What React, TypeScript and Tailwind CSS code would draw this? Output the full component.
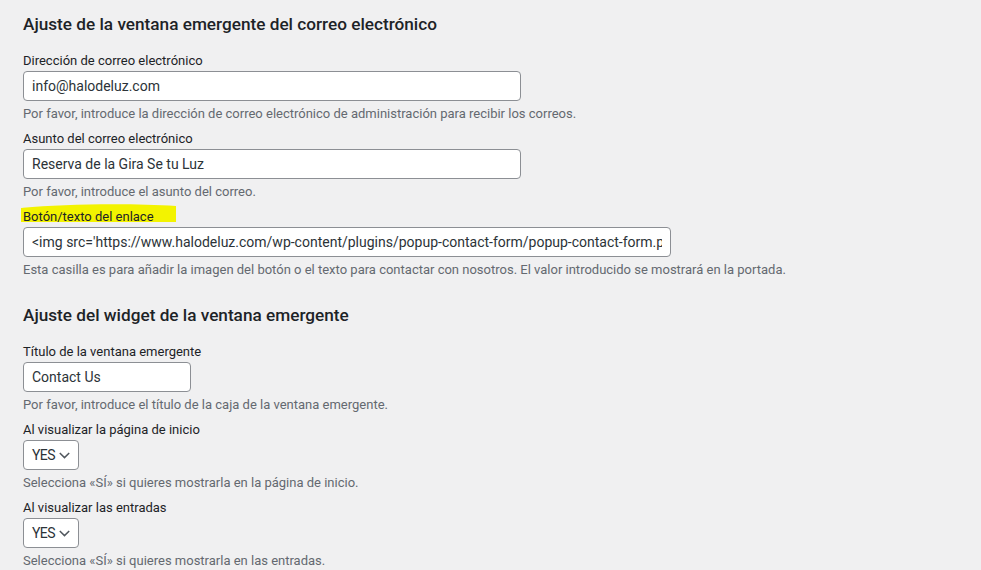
import React from "react";

function Label({ children, highlight }: { children: React.ReactNode; highlight?: boolean }) {
  return (
    <div className="relative h-[20px] text-[13px] leading-[22px] text-[#1d2327]">
      {highlight && (
        <svg className="absolute left-[-3px] top-[-3px]" width="158" height="20" viewBox="0 0 158 20">
          <path d="M1 5 C 40 1, 110 0, 156 3 L 156 19 L 1 19 Z" fill="#f3f300" />
        </svg>
      )}
      <span className="relative">{children}</span>
    </div>
  );
}

function Desc({ children }: { children: React.ReactNode }) {
  return <div className="mt-[2px] h-[20px] text-[13px] leading-[22px] text-[#646970]">{children}</div>;
}

function TextInput({ value, w }: { value: string; w: string }) {
  return (
    <input
      readOnly
      value={value}
      className={`mt-[1px] block h-[30px] ${w} rounded-[4px] border border-[#8c8f94] bg-white px-[8px] font-[Roboto,sans-serif] text-[14px] text-[#2c3338] outline-none`}
    />
  );
}

function Select() {
  return (
    <div className="mt-[1px] flex h-[30px] w-[56px] items-center justify-between rounded-[4px] border border-[#8c8f94] bg-white pl-[8px] pr-[8px] text-[14px] tracking-[-0.6px] text-[#2c3338]">
      <span>YES</span>
      <svg width="11" height="7" viewBox="0 0 11 7">
        <path d="M0.8 1 L5.5 5.6 L10.2 1" fill="none" stroke="#50575e" strokeWidth="1.5" />
      </svg>
    </div>
  );
}

function Field({ children }: { children: React.ReactNode }) {
  return <div className="mt-[5px] first:mt-0">{children}</div>;
}

export default function App() {
  return (
    <div className="h-[570px] w-[981px] overflow-hidden bg-[#f0f0f1] pl-[23px] font-[Roboto,sans-serif]">
      <h2 className="mt-[13px] h-[23px] text-[17.2px] font-medium leading-[23px] text-[#1d2327]">
        Ajuste de la ventana emergente del correo electrónico
      </h2>
      <div className="mt-[14px]">
        <Field>
          <Label>Dirección de correo electrónico</Label>
          <TextInput value="info@halodeluz.com" w="w-[498px]" />
          <Desc>Por favor, introduce la dirección de correo electrónico de administración para recibir los correos.</Desc>
        </Field>
        <Field>
          <Label>Asunto del correo electrónico</Label>
          <TextInput value="Reserva de la Gira Se tu Luz" w="w-[498px]" />
          <Desc>Por favor, introduce el asunto del correo.</Desc>
        </Field>
        <Field>
          <Label highlight>Botón/texto del enlace</Label>
          <TextInput
            value="<img src='https://www.halodeluz.com/wp-content/plugins/popup-contact-form/popup-contact-form.png' />"
            w="w-[648px]"
          />
          <Desc>
            Esta casilla es para añadir la imagen del botón o el texto para contactar con nosotros. El valor introducido se mostrará en la portada.
          </Desc>
        </Field>
      </div>
      <h2 className="mt-[25px] h-[23px] text-[17.2px] font-medium leading-[23px] text-[#1d2327]">
        Ajuste del widget de la ventana emergente
      </h2>
      <div className="mt-[14px]">
        <Field>
          <Label>Título de la ventana emergente</Label>
          <TextInput value="Contact Us" w="w-[168px]" />
          <Desc>Por favor, introduce el título de la caja de la ventana emergente.</Desc>
        </Field>
        <Field>
          <Label>Al visualizar la página de inicio</Label>
          <Select />
          <Desc>Selecciona «SÍ» si quieres mostrarla en la página de inicio.</Desc>
        </Field>
        <Field>
          <Label>Al visualizar las entradas</Label>
          <Select />
          <Desc>Selecciona «SÍ» si quieres mostrarla en las entradas.</Desc>
        </Field>
      </div>
    </div>
  );
}
